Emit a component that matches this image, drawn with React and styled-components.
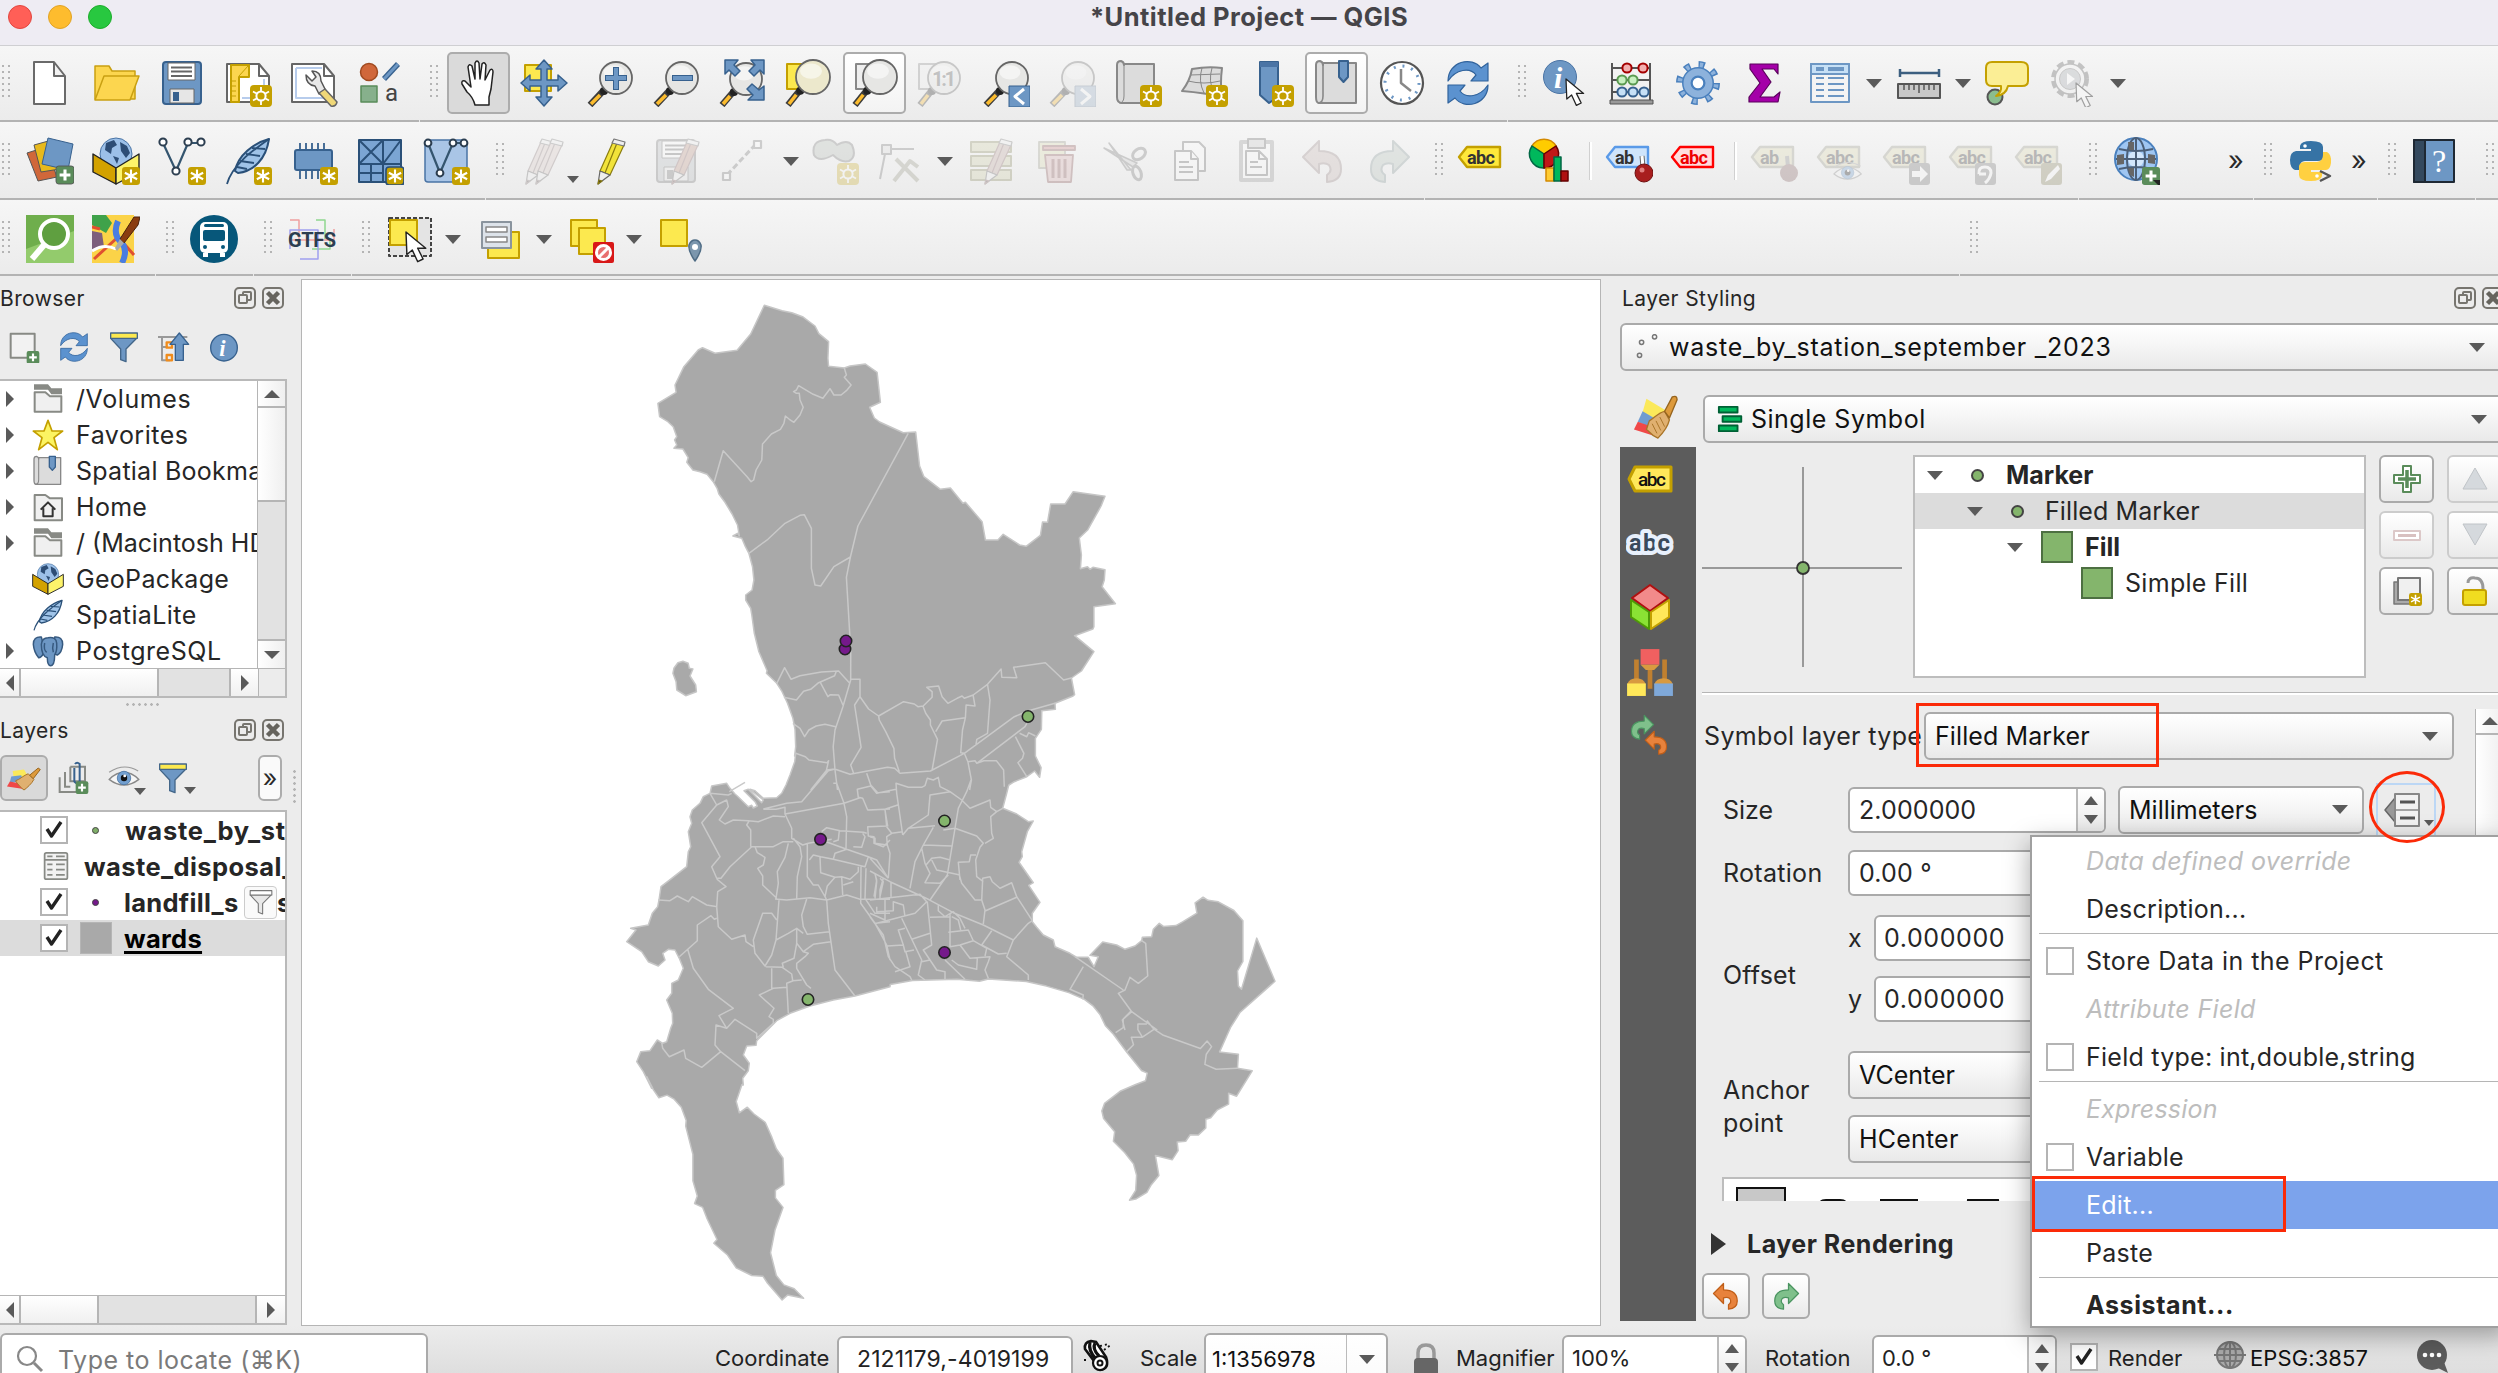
import React from 'react';
import styled, { createGlobalStyle, css } from 'styled-components';

const GlobalStyle = createGlobalStyle`
  * { box-sizing: border-box; }
  body { margin: 0; background: #ececec; }
  svg { display: block; flex: none; }
  svg text { font-family: Roboto, "Liberation Sans", sans-serif; }
  svg text.serif { font-family: "Liberation Serif", serif; }
`;

const font = 'Inter, "Liberation Sans", sans-serif';
const raised = 'linear-gradient(#ffffff, #f7f7f7 40%, #e9e9e9)';

const Window = styled.div`
  position: relative;
  width: 2498px;
  height: 1373px;
  overflow: hidden;
  display: flex;
  flex-direction: column;
  background: #ececec;
  color: #262626;
  font-family: ${font};
  font-size: 25px;
  white-space: nowrap;
`;

const TitleBar = styled.header`
  display: grid;
  grid-template-columns: 1fr auto 1fr;
  flex: none;
  height: 46px;
  padding: 0 0 0 8px;
  background: #eeecf3;
  border-bottom: 1px solid #cfcfd2;
`;
const Lights = styled.div`
  display: flex;
  gap: 16px;
  padding-top: 5px;
`;
const Light = styled.i`
  width: 24px;
  height: 24px;
  border-radius: 50%;
  background: ${p => p.$c};
  border: 1px solid ${p => p.$b};
`;
const WindowTitle = styled.h1`
  margin: 0 8px 0 0;
  font-size: 25.5px;
  line-height: 33px;
  font-weight: 700;
  color: #454448;
  letter-spacing: 0.45px;
`;

const Toolbar = styled.div`
  display: flex;
  flex: none;
  height: ${p => p.$h}px;
  background: linear-gradient(#f6f6f6, #ebebeb);
`;
const Group = styled.div`
  display: flex;
  align-items: center;
  flex: none;
  width: ${p => p.$w}px;
  margin-right: 1px;
  padding-top: ${p => p.$pt || 0}px;
  border-bottom: 2px solid #b3b3b3;
`;
const Grip = styled.i`
  flex: none;
  width: 8px;
  height: 36px;
  margin: 0 7px 0 ${p => p.$ml ?? 10}px;
  background: radial-gradient(circle at 1px 1px, #b4b4b4 1.1px, transparent 1.3px) 0 0 / 6px 6px;
`;
const Tool = styled.button`
  display: flex;
  align-items: center;
  justify-content: center;
  flex: none;
  width: ${p => p.$w || 66}px;
  height: 62px;
  margin: 0 0 0 ${p => p.$ml || 0}px;
  padding: 0;
  border: 0;
  background: none;
  opacity: ${p => (p.$off ? 0.3 : 1)};
  ${p => p.$state && css`
    width: 63px;
    margin: 0 1px 0 2px;
    border: 2px solid #acacac;
    border-radius: 5px;
    background: ${p.$state === 'down' ? '#dadada' : 'linear-gradient(#fff, #f3f3f3)'};
  `}
`;
const Divider = styled.i`
  flex: none;
  width: 3px;
  height: 38px;
  margin: 0 ${p => p.$mr}px 0 ${p => p.$ml}px;
  background: #fff;
  border-left: 1px solid #d0d0d0;
`;
const Caret = styled.i`
  flex: none;
  width: 0;
  height: 0;
  margin: ${p => p.$m || '0 4px'};
  border: ${p => p.$n || 8}px solid transparent;
  border-top: ${p => (p.$n || 8) + (p.$n ? 1 : 1)}px solid #5a5a5a;
  border-bottom: 0;
`;
const More = styled.span`
  font-size: ${p => p.$s || 27}px;
  line-height: 28px;
  font-weight: 400;
  color: #2a2a2a;
  margin-left: ${p => p.$ml || 0}px;
`;

/* ---------- icons ---------- */

const Ico = ({ s = 48, v = '0 0 48 48', children }) => (
  <svg width={s} height={s} viewBox={v} fill="none" strokeLinejoin="round">{children}</svg>
);
const Glyph = styled.svg`
  margin: ${p => p.$m || 0};
`;
const Badge = ({ x = 26, y = 26, s = 22 }) => (
  <g transform={`translate(${x} ${y}) scale(${s / 22})`}>
    <rect width="22" height="22" rx="4" fill="#c4a000" />
    <path d="M11 3v16M3.5 7l15 8M3.5 15l15-8" stroke="#fff" strokeWidth="2.6" />
  </g>
);
const GearBadge = () => (
  <g transform="translate(26 26)">
    <rect width="22" height="22" rx="4" fill="#c4a000" />
    <path d="M11 2v18M3 6.500l16 9M3 15.500l16-9" stroke="#fff" strokeWidth="1.800" />
    <circle cx="11" cy="11" r="4.600" fill="#c4a000" stroke="#fff" strokeWidth="2" />
  </g>
);
const PlusBadge = ({ x = 28, y = 28, s = 20 }) => (
  <g transform={`translate(${x} ${y}) scale(${s / 20})`}>
    <rect width="20" height="20" rx="3" fill="#5a8c5a" />
    <path d="M10 4v12M4 10h12" stroke="#fff" strokeWidth="3.4" />
  </g>
);
const Glass = ({ x = 30, y = 19, r = 16, fill = '#e6e6e4', children }) => (
  <g>
    <path d={`M${x - r * 0.75} ${y + r * 0.75}L4 46`} stroke="#3c3c3c" strokeWidth="6.5" />
    <path d={`M${x - r * 0.75 - 4} ${y + r * 0.75 + 5}L5 45`} stroke="#fcbc2e" strokeWidth="3.5" />
    <circle cx={x - r * 0.75} cy={y + r * 0.75 + 1} r="4" fill="#222" />
    <circle cx={x} cy={y} r={r} fill={fill} stroke="#666" strokeWidth="1.8" />
    <ellipse cx={x - 2} cy={y - r * 0.35} rx={r * 0.65} ry={r * 0.45} fill="#fff" opacity=".55" />
    {children}
  </g>
);
const Tag = ({ bg = '#ffe83b', edge = '#c4a000', text = 'abc', ink = '#333' }) => (
  <g>
    <path d="M2 20L10 10H43V30H10Z" fill={bg} stroke={edge} strokeWidth="2.4" />
    <text x="10" y="26.5" fontSize="18" fontWeight="700" fill={ink} textLength={text === 'abc' ? 28 : 19}>{text}</text>
  </g>
);
const Pencil = ({ x = 0, c = '#f2e33a', e = '#8a7c10' }) => (
  <g transform={`translate(${x} 0)`} stroke={e} strokeWidth="1.2">
    <path d="M27 5L38 8L24 38L14 34Z" fill={c} />
    <path d="M31 6L19 36" stroke={e} />
    <path d="M14 34L24 38L12 47Z" fill="#eee" stroke="#666" />
    <path d="M12 47l1-4 3 1z" fill="#333" />
    <path d="M28 2L39 5L38 9L26 6Z" fill="#eee" stroke="#777" />
  </g>
);
const Cursor = ({ x = 0, y = 0, s = 1 }) => (
  <path transform={`translate(${x} ${y}) scale(${s})`} d="M0 0L1 25L7 20L13 33L19 30L13 18L22 18Z" fill="#fff" stroke="#222" strokeWidth="1.6" />
);
const Funnel = ({ a = '#6d97c4', top = '#fce94f', e = '#436689' }) => (
  <g stroke={e} strokeWidth="2">
    <path d="M4 11L19 27V43L27 46V27L43 11Z" fill={a} />
    <rect x="4" y="3" width="40" height="8" fill={top} />
  </g>
);
const Feather = () => (
  <g>
    <path d="M45 2C30 6 14 18 11 34L14 36C30 34 42 22 45 2Z" fill="#9fc3e8" stroke="#2a5078" strokeWidth="2" />
    <path d="M45 2C28 14 8 28 3 47M16 24l14 2M22 17l14 2M28 11l13 1M13 30l10 2" stroke="#2a5078" strokeWidth="1.8" />
  </g>
);
const Refresh = () => (
  <g fill="#5b92cf" stroke="#31639c" strokeWidth="1.2">
    <path d="M4 22C4 2 28-3 37 9L44 4V22H27L32 16C26 8 12 10 4 22Z" />
    <path d="M44 26C44 46 20 51 11 39L4 44V26H21L16 32C22 40 36 38 44 26Z" />
  </g>
);
const BoxGlobe = () => (
  <g>
    <circle cx="24" cy="17" r="16" fill="#9cc0e8" stroke="#4a74a5" />
    <path d="M14 6l8-3 3 5-5 3-1 6-6-4zM28 5l7 4 3 7-4 5-5-7zM21 19l6 2-2 6z" fill="#2d4d75" />
    <path d="M1 17L24 31V47L1 35Z" fill="#d3a200" stroke="#222" strokeWidth="1.4" />
    <path d="M47 17L24 31V47L47 35Z" fill="#fdf36a" stroke="#222" strokeWidth="1.4" />
  </g>
);
const Brush = () => (
  <g>
    <path d="M14 4L34 16L26 26L10 18Z" fill="#fbe95a" />
    <path d="M10 17L22 24L18 34L5 28Z" fill="#6f9cd0" />
    <path d="M5 28L22 34L20 42L1 36Z" fill="#f04848" />
    <path d="M17 27C22 24 27 18 33 17L38 26C36 34 31 40 26 45C18 42 18 38 14 36Z" fill="#e0b070" stroke="#a87428" strokeWidth="1.4" />
    <path d="M33 17L41 2Q46 0 46 5L38 24Z" fill="#dd9a3c" stroke="#96641e" strokeWidth="1.4" />
    <path d="M20 30l5 10M24 27l5 10M28 23l5 10" stroke="#a87428" />
  </g>
);
const FlatBrush = () => (
  <g>
    <path d="M8 14L24 12L30 22L10 26Z" fill="#fbe95a" />
    <path d="M6 22L20 20L24 30L4 30Z" fill="#6f9cd0" />
    <path d="M4 29L20 32L26 40L0 36Z" fill="#f04848" />
    <path d="M12 28C18 26 24 20 30 18L38 26C35 32 28 38 24 41C20 38 16 34 12 28Z" fill="#e0b070" stroke="#a87428" strokeWidth="1.4" />
    <path d="M32 20L44 10L47 12L37 25Z" fill="#dd9a3c" stroke="#96641e" strokeWidth="1.4" />
  </g>
);
const Folder = ({ home }) => home ? (
  <g stroke="#888a85" strokeWidth="3">
    <path d="M4 6H20L27 11H45V44H4Z" fill="#f0f0f0" />
    <path d="M13 28L24 17L35 28M17 26V38H31V26" stroke="#333" />
  </g>
) : (
  <g>
    <path d="M3 2H24L29 8H45V17H29L24 10H3Z" fill="#888a85" />
    <path d="M4 14H20L27 20H44V43H4Z" fill="#f0f0f0" stroke="#888a85" strokeWidth="3" />
  </g>
);
const BookmarkMap = () => (
  <g>
    <path d="M10 4H43V44H6Q3 44 3 38V6Q3 2 7 2Q10 3 10 6Z" fill="#dcdcdc" stroke="#888" strokeWidth="2" />
    <path d="M10 5V37Q10 44 5 44" stroke="#888" strokeWidth="1.6" />
    <path d="M26 2H35V18L30.5 23L26 18Z" fill="#6d97c4" stroke="#37618e" strokeWidth="2" />
  </g>
);
const Eye = () => (
  <g>
    <path d="M3 26Q24 6 45 26Q24 42 3 26Z" fill="#f6f6f6" stroke="#888" strokeWidth="2" />
    <circle cx="24" cy="24" r="9.5" fill="#729fcf" stroke="#3d6a9c" />
    <circle cx="24" cy="24" r="4.5" fill="#111" />
    <circle cx="25" cy="21" r="2" fill="#fff" />
    <path d="M3 16Q24 2 44 14" stroke="#999" strokeWidth="1.6" />
  </g>
);
const UndoArrow = ({ c = '#e8823c', e = '#c05e18' }) => (
  <path d="M4 20L20 4V14Q42 14 42 32Q42 44 28 45V38Q34 34 30 28Q26 25 20 27V36Z" fill={c} stroke={e} strokeWidth="2" />
);
const RedoArrow = ({ c = '#7fc08b', e = '#4a9460' }) => (
  <g transform="translate(48 0) scale(-1 1)"><UndoArrow c={c} e={e} /></g>
);
const DiskShape = ({ c = '#6d97c4', e = '#37618e' }) => (
  <g>
    <rect x="5" y="3" width="38" height="42" rx="3" fill={c} stroke={e} strokeWidth="2" />
    <rect x="10" y="4" width="27" height="17" fill="#fff" stroke="#666" />
    <path d="M13 8.500H34M13 12.500H34M13 17H34" stroke="#666" strokeWidth="2" />
    <rect x="12" y="30" width="24" height="14" fill="#e6e6e6" stroke="#666" />
    <rect x="15" y="33" width="6" height="9" fill={e} />
  </g>
);

const beads = [
  [19, 9, '#f2b0b0', '#a40000'], [35, 9, '#f2b0b0', '#a40000'],
  [14, 21, '#c8f0c0', '#5a9a50'], [25, 21, '#c8f0c0', '#5a9a50'],
  [14, 33, '#c6e0f6', '#37618e'], [25, 33, '#c6e0f6', '#37618e'], [36, 33, '#c6e0f6', '#37618e'],
];

const icons = {
  page: <path d="M8 3H28L39 17V45H8ZM28 3V17H39" fill="#fff" stroke="#6a6a6a" strokeWidth="2" />,
  open: <g fill="#fcd64f" stroke="#c9a012" strokeWidth="1.5"><path d="M3 7H17L20 12H43V40H3Z" /><path d="M12 17H47L38 41H3Z" /></g>,
  save: <DiskShape />,
  layout: <g><path d="M3 5H35L45 17V43H3Z" fill="#fff" stroke="#666" strokeWidth="2" /><path d="M35 5V17H45" stroke="#666" strokeWidth="2" /><path d="M7 6H25V18H15V43H7Z" fill="#fcd64f" stroke="#c4a000" strokeWidth="2" /><path d="M8 22h4M8 27h4M8 32h4M8 37h4M24 7L15 17" stroke="#c4a000" /><path d="M18 39H28M40 20V28" stroke="#b7ccec" strokeWidth="2" /><GearBadge /></g>,
  wrench: <g><path d="M2 5H34L44 17V43H2Z" fill="#fff" stroke="#666" strokeWidth="2" /><path d="M34 5V17H44" stroke="#666" strokeWidth="2" /><path d="M6 9H32M6 9V39H36" stroke="#b7ccec" strokeWidth="2" /><path d="M16 16L22 22L26 18L22 12Q31 12 31 22L36 32L29 35L25 27Q16 26 16 16Z" fill="#e8e8e8" stroke="#555" strokeWidth="1.5" /><path d="M29 34L35 30L47 43Q46 48 41 47Z" fill="#f0d878" stroke="#666" strokeWidth="1.5" /></g>,
  style: <g><circle cx="13" cy="13" r="8.500" fill="#d0673a" stroke="#a04a20" strokeWidth="1.500" /><path d="M28 20L42 5" stroke="#37618e" strokeWidth="5.500" /><path d="M28 20L42 5" stroke="#6d97c4" strokeWidth="3" /><rect x="5" y="27" width="16" height="16" fill="#87b08c" stroke="#5a8c5a" strokeWidth="1.500" /><text x="29" y="42" fontSize="24" fill="#444">a</text></g>,
  hand: <path d="M20 46Q18 38 12 33L7 25Q6 21 10 22L16 28L13 8Q14 4 17 7L20 20V4Q22 0 24 4L25 20L27 5Q29 2 31 6L30 21L35 11Q38 9 38 13L36 30L34 38V46Z" fill="#fff" stroke="#222" strokeWidth="1.500" />,
  pan: <g><rect x="5" y="6" width="26" height="26" fill="#fce94f" stroke="#c4a000" strokeWidth="2" /><path d="M24 1L32 10H27V21H38V16L47 24L38 32V27H27V38H32L24 47L16 38H21V27H10V32L1 24L10 16V21H21V10H16Z" fill="#6d97c4" stroke="#37618e" strokeWidth="1.500" /></g>,
  zin: <Glass><path d="M30 8V31M19 19H41" stroke="#37618e" strokeWidth="6" /><path d="M30 9V30M20 19H40" stroke="#6d97c4" strokeWidth="4" /></Glass>,
  zout: <Glass><path d="M20 19H41" stroke="#37618e" strokeWidth="6" /><path d="M21 19H40" stroke="#6d97c4" strokeWidth="4" /></Glass>,
  zfull: <g><Glass x={28} y={20} /><g fill="#6d97c4" stroke="#37618e" strokeWidth="1.500"><path d="M7 1H20L16 6L22 12L17 17L11 11L7 15Z" /><path d="M46 1H33L37 6L31 12L36 17L42 11L46 15Z" /><path d="M46 41H30L35 36L29 30L34 25L41 31L46 27Z" /></g></g>,
  zsel: <g><rect x="3" y="5" width="25" height="25" fill="#fce94f" stroke="#c4a000" strokeWidth="2" /><Glass x={29} y={18} r={17} fill="#ece8cc" /></g>,
  zlayer: <g><rect x="5" y="5" width="25" height="25" fill="#eee" stroke="#888" strokeWidth="2" /><Glass x={29} y={18} r={17} /></g>,
  znative: <g><rect x="3" y="5" width="25" height="25" fill="#eee" stroke="#888" strokeWidth="2" /><Glass x={28} y={19} r={16}><text x="16" y="27" fontSize="20" fontWeight="700" fill="#555" textLength="24">1:1</text></Glass></g>,
  zlast: <g><Glass /><rect x="27" y="27" width="21" height="21" fill="#6d97c4" stroke="#37618e" /><path d="M42 30L33 37.500L42 45" stroke="#fff" strokeWidth="3" /></g>,
  znext: <g><Glass /><rect x="27" y="27" width="21" height="21" fill="#9ab0c8" stroke="#6a7f95" /><path d="M33 30L42 37.500L33 45" stroke="#fff" strokeWidth="3" /></g>,
  newmap: <g><path d="M10 5H40V44H7Q3 43 3 38V6Q3 2 7 2Q10 3 10 6Z" fill="#dcdcdc" stroke="#888" strokeWidth="2" /><path d="M10 5V37Q10 44 5 44" stroke="#888" /><GearBadge /></g>,
  map3d: <g><path d="M12 10Q28 7 42 9Q40 24 42 38Q26 34 2 32Q10 22 12 10Z" fill="#dcdcdc" stroke="#888" strokeWidth="2" /><path d="M8 22Q24 26 40 22M22 9Q18 22 24 34M32 9Q28 22 34 34M10 16L40 15" stroke="#888" /><GearBadge /></g>,
  bookmark: <g><path d="M14 3H32V38L23 44L14 36Z" fill="#6d97c4" stroke="#37618e" strokeWidth="2" /><path d="M14 3H32V8H14Z" fill="#4a74a5" /><GearBadge /></g>,
  showbm: <BookmarkMap />,
  clock: <g><circle cx="24" cy="24" r="21" fill="#fff" stroke="#555" strokeWidth="2.200" /><circle cx="24" cy="24" r="17" stroke="#6d97c4" strokeWidth="3" strokeDasharray="2 6.900" /><path d="M23 10V24L33 32" stroke="#888" strokeWidth="2.500" /></g>,
  refresh: <Refresh />,
  identify: <g><circle cx="18" cy="18" r="16.500" fill="#6d97c4" stroke="#4a74a5" /><text className="serif" x="12" y="29" fontSize="30" fontStyle="italic" fontWeight="700" fill="#fff">i</text><Cursor x={24} y={20} s={0.8} /></g>,
  abacus: <g><path d="M4 4V42M42 4V42M4 9H42M4 21H42M4 33H42" stroke="#555" strokeWidth="2" /><rect x="2" y="41" width="43" height="4" fill="#999" stroke="#555" />{beads.map((b, i) => <circle key={i} cx={b[0]} cy={b[1]} r="4.600" fill={b[2]} stroke={b[3]} strokeWidth="2" />)}</g>,
  gear: <g><circle cx="24" cy="24" r="18" stroke="#4a80bd" strokeWidth="8" strokeDasharray="6 8.137" /><circle cx="24" cy="24" r="17" stroke="#8db2dc" strokeWidth="7" strokeDasharray="3 10.350" strokeDashoffset="-1.300" /><circle cx="24" cy="24" r="11" stroke="#4a80bd" strokeWidth="10" /><circle cx="24" cy="24" r="11" stroke="#8db2dc" strokeWidth="7" /><circle cx="24" cy="24" r="6" fill="#fff" stroke="#4a80bd" strokeWidth="1.500" /></g>,
  sigma: <path d="M10 5H38V15L34 10H22L31 23L20 38H34L40 33L38 43H9V38L20 24L10 10Z" fill="#a400a8" stroke="#5a005c" strokeWidth="1.200" />,
  table: <g><rect x="5" y="5" width="38" height="38" fill="#f4f4f4" stroke="#6d97c4" strokeWidth="2" /><rect x="5" y="5" width="38" height="10" fill="#c6e0f6" stroke="#6d97c4" strokeWidth="2" /><path d="M10 10H18M22 10H38" stroke="#6d97c4" strokeWidth="4" /><path d="M10 19H18M22 19H38M10 25H18M22 25H38M10 31H18M22 31H38M10 37H18M22 37H38" stroke="#6d97c4" strokeWidth="2" /></g>,
  ruler: <g><path d="M5 14H44M5 10V18M44 10V18" stroke="#3c5f80" strokeWidth="2.500" /><rect x="3" y="25" width="42" height="14" fill="#c8c8c8" stroke="#555" strokeWidth="2" /><path d="M9 25v6M14 25v6M19 25v6M24 25v9M29 25v6M34 25v6M39 25v6" stroke="#555" strokeWidth="1.500" /></g>,
  tip: <g><circle cx="11" cy="38" r="7.500" fill="#8bbd8f" stroke="#555" strokeWidth="2" /><path d="M8 3H37Q44 3 44 9V22Q44 27 38 27H24Q22 36 12 37Q18 33 17 27H8Q2 27 2 21V9Q2 3 8 3Z" fill="#fbee95" stroke="#c4a000" strokeWidth="2" /></g>,
  action: <g opacity=".38"><circle cx="20" cy="20" r="17" stroke="#777" strokeWidth="4" strokeDasharray="7 4" /><circle cx="20" cy="20" r="15" fill="#f4f4f4" stroke="#777" strokeWidth="1.500" /><circle cx="20" cy="20" r="10.500" fill="#b5b9bd" stroke="#888" /><path d="M17 14L25 20L17 26Z" fill="#fff" /><Cursor x={26} y={24} s={0.75} /></g>,
  source: <g stroke="#555" strokeWidth="1"><path d="M1 16L20 10L31 40L12 44Z" fill="#d0673a" /><path d="M8 8L26 3L34 32L15 35Z" fill="#e8b91c" /><path d="M22 1L47 7L42 33L16 27Z" fill="#6d97c4" stroke="#37618e" /><PlusBadge x={30} y={29} s={18} /></g>,
  gpkg: <g><BoxGlobe /><Badge x={30} y={30} s={18} /></g>,
  shp: <g><path d="M5 6L18 34L30 6H42" stroke="#34556f" strokeWidth="2.200" />{[[5, 5], [18, 34], [30, 5], [43, 5]].map((p, i) => <circle key={i} cx={p[0]} cy={p[1]} r="3.600" fill="#fff" stroke="#2c3e50" strokeWidth="2" />)}<Badge x={30} y={30} s={18} /></g>,
  spatialite: <g><Feather /><Badge x={30} y={30} s={18} /></g>,
  chip: <g><path d="M10 6V42M16 6V42M22 6V42M28 6V42M34 6V42" stroke="#37618e" strokeWidth="1.800" /><rect x="5" y="13" width="37" height="20" rx="2" fill="#6d97c4" stroke="#37618e" strokeWidth="2" /><Badge x={30} y={30} s={18} /></g>,
  mesh: <g stroke="#2a5078" strokeWidth="2"><rect x="3" y="3" width="42" height="42" fill="#7ba5d3" /><path d="M3 27H45M27 3V45M3 3L27 27L45 3M3 27L27 3M15 27V45M3 36H27" /><Badge x={30} y={30} s={18} /></g>,
  virtual: <g><rect x="3" y="3" width="42" height="42" rx="3" fill="#a9c5e6" stroke="#4a74a5" strokeWidth="1.500" /><path d="M6 6L18 36L31 6H42" stroke="#34556f" strokeWidth="2.200" />{[[6, 6], [18, 36], [31, 6], [42, 6]].map((p, i) => <circle key={i} cx={p[0]} cy={p[1]} r="3.400" fill="#fff" stroke="#2c3e50" strokeWidth="2" />)}<Badge x={30} y={30} s={18} /></g>,
  pencils: <g><Pencil x={-6} c="#d8c8c4" e="#877" /><Pencil x={4} c="#d8c8c4" e="#877" /></g>,
  pencil: <Pencil />,
  saveedit: <g><DiskShape c="#b8bcc0" e="#777" /><Pencil x={8} c="#c09888" e="#866" /></g>,
  line: <g stroke="#777" strokeWidth="2.200"><path d="M9 38L37 8" strokeDasharray="6 3" strokeWidth="3" /><rect x="5" y="36" width="7" height="7" fill="#fff" /><rect x="36" y="4" width="7" height="7" fill="#fff" /></g>,
  poly: <g><path d="M3 18Q0 4 14 3Q22 2 26 8Q36 2 41 8Q46 20 38 24Q30 26 22 18Q8 26 3 18Z" fill="#b4bcb4" stroke="#777" strokeWidth="2" /><g opacity=".8"><GearBadge /></g></g>,
  vertex: <g stroke="#777" strokeWidth="2"><path d="M6 42L12 12L40 12" /><rect x="8" y="8" width="9" height="9" fill="#ddd" /><path d="M20 44L36 24L44 30M22 22L44 44" strokeWidth="4" stroke="#998" /></g>,
  form: <g stroke="#8a8a60" strokeWidth="2"><rect x="4" y="5" width="40" height="10" fill="#cfcfa8" /><rect x="4" y="19" width="40" height="10" fill="#cfcfa8" /><rect x="4" y="33" width="40" height="10" fill="#cfcfa8" /><Pencil x={6} c="#c0a8a0" e="#866" /></g>,
  trash: <g stroke="#855" strokeWidth="1.800"><rect x="4" y="5" width="26" height="26" fill="#dcdcb0" stroke="#998" /><rect x="8" y="9" width="32" height="4" fill="#c88" /><path d="M10 18H38L36 45H13Z" fill="#d8b0b0" /><path d="M18 22V41M24 22V41M30 22V41" strokeWidth="3" /></g>,
  cut: <g stroke="#777" strokeWidth="1.500"><path d="M3 11L32 30L36 26ZM8 6L30 33L26 33Z" fill="#ccc" /><ellipse cx="38" cy="17" rx="7" ry="5" transform="rotate(-35 38 17)" strokeWidth="3" /><ellipse cx="36" cy="36" rx="4" ry="7" transform="rotate(-20 36 36)" strokeWidth="3" /></g>,
  copy: <g fill="#fff" stroke="#666" strokeWidth="2"><path d="M16 5H32L38 11V34H16Z" /><path d="M8 14H24L31 22V43H8Z" /><path d="M24 14V22H31M12 25h10M12 30h14M12 35h14" /></g>,
  paste: <g fill="#fff" stroke="#666" strokeWidth="2"><rect x="8" y="5" width="31" height="38" strokeWidth="4" stroke="#999" /><rect x="15" y="2" width="17" height="9" fill="#ccc" /><path d="M13 14H26L34 22V38H13ZM26 14V22H34M17 25h8M17 30h12" /></g>,
  undo: <UndoArrow c="#c8b8b4" e="#988" />,
  redo: <RedoArrow c="#b8c4bc" e="#899" />,
  label: <Tag />,
  diagram: <g stroke="#3a2a1a" strokeWidth="1.500"><path d="M18 17L6 9A14 14 0 0 1 30 9Z" fill="#ffcc00" stroke="#d48a00" /><path d="M18 17L6 9A14 14 0 0 0 18 31Z" fill="#00b85c" stroke="#064" /><path d="M18 17L30 9A14 14 0 0 1 18 31Z" fill="#c01818" stroke="#600" /><rect x="20" y="31" width="8" height="13" fill="#ffcc33" stroke="#d48a00" /><rect x="28" y="20" width="7" height="24" fill="#00b85c" stroke="#064" /><rect x="35" y="34" width="7" height="10" fill="#b01010" stroke="#600" /></g>,
  pin: <g><Tag bg="#cfe4fb" edge="#5a9ae8" text="ab" /><path d="M37 19L38 30" stroke="#666" strokeWidth="5" /><path d="M37 19L38 30" stroke="#fff" strokeWidth="3" /><circle cx="39" cy="36" r="9" fill="#a81e1e" stroke="#701010" /><circle cx="37" cy="33" r="2.500" fill="#e08080" /></g>,
  labelred: <Tag bg="#fdd" edge="#f00" ink="#e00" />,
  pinoff: <g><Tag bg="#ddd8b0" edge="#998" text="ab" /><path d="M37 19L38 30" stroke="#888" strokeWidth="4" /><circle cx="39" cy="36" r="9" fill="#866" /></g>,
  labeleye: <g><Tag bg="#ddd8b0" edge="#998" /><g transform="translate(16 20) scale(.65)"><Eye /></g></g>,
  labelmove: <g><Tag bg="#ddd8b0" edge="#998" /><rect x="27" y="26" width="21" height="22" rx="3" fill="#777" /><path d="M30 34h8v-5l8 8-8 8v-5h-8z" fill="#fff" /></g>,
  labelrot: <g><Tag bg="#ddd8b0" edge="#998" /><rect x="27" y="26" width="21" height="22" rx="3" fill="#777" /><path d="M31 37Q30 30 37 30Q43 30 43 36Q42 42 37 46M31 37L38 37" stroke="#fff" strokeWidth="3" /></g>,
  labeledit: <g><Tag bg="#ddd8b0" edge="#998" /><rect x="27" y="26" width="21" height="22" rx="3" fill="#8a8560" /><path d="M31 45L34 38L44 28L46 32L37 42Z" fill="#fff" /></g>,
  globe: <g><circle cx="24" cy="22" r="21" fill="#9fc6f2" stroke="#4a80bd" strokeWidth="2" /><circle cx="24" cy="22" r="8" fill="#e8f4ff" opacity=".7" /><ellipse cx="24" cy="22" rx="9" ry="21" stroke="#4b5f78" strokeWidth="2" /><path d="M4 22H44M7 12Q24 16 41 12M7 32Q24 28 41 32M24 1V43" stroke="#4b5f78" strokeWidth="2" /><path d="M5 18l7-1v10l-7 1zM36 17l7 1v9l-7-1zM16 5l6 0v8h-5zM16 31h6v9l-4-2z" fill="#666" /><PlusBadge x={30} y={30} s={18} /><path d="M41 43h12l-6 6z" fill="#222" /></g>,
  python: <g><path d="M25 4Q37 4 37 10V20Q37 24 32 24H19Q14 24 14 30V33H9Q4 31 4 23Q4 15 10 14H25V12H14V9Q15 4 25 4Z" fill="#3673a5" /><circle cx="19" cy="9" r="1.800" fill="#fff" /><path d="M25 44Q13 44 13 38V29Q14 25 19 25H31Q37 24 37 18V15H41Q46 18 45 26Q44 33 40 33H25V35H36V39Q35 44 25 44Z" fill="#ffd040" /><circle cx="31" cy="39" r="1.800" fill="#fff" /><path d="M34 34L44 39L34 44" stroke="#555" strokeWidth="2.500" /></g>,
  book: <g><rect x="4" y="3" width="40" height="42" fill="#6d97c4" stroke="#1e2833" strokeWidth="2" /><rect x="4" y="3" width="11" height="42" fill="#34495e" stroke="#1e2833" strokeWidth="2" /><text className="serif" x="22" y="35" fontSize="32" fill="#fff">?</text></g>,
  osmsearch: <g><rect width="48" height="48" fill="#6fae4c" /><path d="M0 34L48 16V48H0Z" fill="#93cb6c" /><circle cx="28" cy="19" r="14" fill="#5f9f40" stroke="#fff" strokeWidth="4" /><path d="M18 30L6 44" stroke="#fff" strokeWidth="6" /></g>,
  qms: <g><rect width="42" height="48" fill="#fbd348" /><path d="M0 0h14l6 8-6 10L0 10z" fill="#3fa24a" /><path d="M0 16l10 2 2 14-12 4z" fill="#7d5f7c" /><path d="M0 12l8 2M2 44L26 22L42 40" stroke="#e05030" strokeWidth="3" /><path d="M26 6Q20 20 30 28Q36 36 30 48" stroke="#4a7de0" strokeWidth="6" /><path d="M0 36Q12 28 24 34" stroke="#fff" strokeWidth="3" /><path d="M28 24L42 2L48 2L46 10L32 28Z" fill="#8a3c10" stroke="#4a2008" /><path d="M28 24L32 28L25 36L23 33Z" fill="#aaa" /></g>,
  bus: <g><circle cx="24" cy="24" r="24" fill="#07577a" /><rect x="10" y="7" width="28" height="31" rx="5" fill="#fff" /><rect x="14" y="9" width="20" height="3" rx="1.500" fill="#07577a" /><rect x="13" y="15" width="22" height="11" rx="2" fill="#07577a" /><circle cx="15" cy="32" r="2" fill="#07577a" /><circle cx="33" cy="32" r="2" fill="#07577a" /><path d="M13 38v4h5v-4M30 38v4h5v-4" fill="#fff" /></g>,
  gtfs: <g><path d="M2 5H11V26" stroke="#f0a0a0" strokeWidth="1.500" /><path d="M28 5H37V24M24 34H42V24" stroke="#90d890" strokeWidth="1.500" /><path d="M2 34V15H30V44H12" stroke="#a0a0f0" strokeWidth="1.500" /><path d="M4 25H46V14" stroke="#f0a0a0" strokeWidth="1.500" /><text x="0" y="32" fontSize="20" fontWeight="700" fill="#2c3e50" textLength="48">GTFS</text></g>,
  select: <g><rect x="3" y="3" width="42" height="38" fill="#e4e4e4" stroke="#444" strokeWidth="2" strokeDasharray="4 2" /><rect x="4" y="5" width="27" height="25" fill="#fce94f" stroke="#c4a000" strokeWidth="2" /><Cursor x={20} y={17} s={0.9} /></g>,
  selform: <g><rect x="11" y="17" width="31" height="26" fill="#fce94f" stroke="#c4a000" strokeWidth="2" /><rect x="5" y="7" width="29" height="26" fill="#dde3ea" stroke="#8a949e" strokeWidth="2" /><rect x="9" y="12" width="21" height="5" fill="#fff" stroke="#888" strokeWidth="1.500" /><rect x="9" y="22" width="21" height="5" fill="#fff" stroke="#888" strokeWidth="1.500" /></g>,
  deselect: <g><rect x="3" y="5" width="26" height="26" fill="#fce94f" stroke="#c4a000" strokeWidth="2" /><rect x="11" y="13" width="26" height="26" fill="#fce94f" stroke="#c4a000" strokeWidth="2" /><rect x="25" y="27" width="21" height="21" rx="2" fill="#d81818" /><circle cx="35.500" cy="37.500" r="7" fill="#e87070" stroke="#fff" strokeWidth="3" /><path d="M31 42L40 33" stroke="#fff" strokeWidth="3" /></g>,
  selloc: <g><rect x="5" y="5" width="26" height="26" fill="#fce94f" stroke="#c4a000" strokeWidth="2" /><path d="M39 46Q32 36 33 30Q35 25 39 25Q43 25 45 30Q46 36 39 46Z" fill="#7b96ad" stroke="#4f6c85" strokeWidth="1.500" /><circle cx="39" cy="32" r="3" fill="#fff" /></g>,
};

const T = ({ i, ...p }) => <Tool {...p}><Ico>{icons[i]}</Ico></Tool>;

/* ---------- generic controls ---------- */

const Text = styled.span`
  font-size: ${p => p.$s || 25}px;
  letter-spacing: ${p => p.$ls || 0}px;
  margin-left: ${p => p.$ml || 0}px;
  font-weight: ${p => (p.$b ? 700 : 400)};
  width: ${p => (p.$w ? p.$w + 'px' : 'auto')};
  color: ${p => p.$c || 'inherit'};
  ${p => p.$lh && `line-height: ${p.$lh}px;`}
  flex: none;
`;
const Spacer = styled.div`
  flex: none;
  height: ${p => p.$h}px;
`;
const DockTitle = styled.div`
  display: flex;
  align-items: center;
  flex: none;
  height: ${p => p.$h || 44}px;
  padding-left: ${p => p.$pl || 0}px;
`;
const DockButton = styled.i`
  display: grid;
  place-items: center;
  flex: none;
  width: 22px;
  height: 22px;
  margin-left: ${p => p.$ml ?? 6}px;
  border: 2px solid #77756f;
  border-radius: 5px;
`;
const DockButtons = ({ ml }) => (
  <>
    <DockButton $ml={ml}><Ico s={16} v="0 0 16 16"><rect x="6" y="2" width="8" height="8" rx="1" stroke="#77756f" strokeWidth="2" /><rect x="2" y="5" width="8" height="8" rx="1" fill="#ececec" stroke="#77756f" strokeWidth="2" /></Ico></DockButton>
    <DockButton><Ico s={16} v="0 0 16 16"><path d="M2.500 2.500L13.500 13.500M13.500 2.500L2.500 13.500" stroke="#66645e" strokeWidth="4.500" /></Ico></DockButton>
  </>
);

const Combo = styled.div`
  display: flex;
  align-items: ${p => (p.$top ? 'flex-start' : 'center')};
  flex: none;
  width: ${p => p.$w}px;
  height: ${p => p.$h || 48}px;
  margin: ${p => p.$mt || 0}px 0 0 ${p => p.$ml || 0}px;
  padding: 0 ${p => p.$pr ?? 14}px 0 ${p => p.$pl || 9}px;
  background: ${p => (p.$top ? 'linear-gradient(#fff, #fafafa)' : raised)};
  border: 2px solid #aaa;
  border-radius: 6px;
  color: #111;
`;
const Fill = styled.i`
  flex: 1;
`;
const Field = styled.div`
  display: flex;
  align-items: ${p => (p.$top ? 'flex-start' : 'center')};
  flex: none;
  width: ${p => p.$w}px;
  height: ${p => p.$h || 46}px;
  margin: ${p => p.$mt || 0}px 0 0 ${p => p.$ml || 0}px;
  padding-left: ${p => p.$pl ?? 9}px;
  background: #fff;
  border: 2px solid #aaa;
  border-radius: 6px;
  overflow: hidden;
`;
const Steps = styled.i`
  display: flex;
  flex-direction: column;
  align-items: center;
  justify-content: center;
  gap: 10px;
  width: 28px;
  align-self: stretch;
  border-left: 2px solid #bbb;
  background: ${raised};
  &::before, &::after {
    content: '';
    border: 7.5px solid transparent;
  }
  &::before { border-bottom: 9px solid #5a5a5a; border-top: 0; }
  &::after { border-top: 9px solid #5a5a5a; border-bottom: 0; }
`;
const DropZone = styled.i`
  display: flex;
  justify-content: center;
  width: 40px;
  align-self: stretch;
  padding-top: 20px;
  border-left: 1px solid #bbb;
`;
const Spin = ({ value, ls, ts, ...p }) => <Field {...p}><Text $ls={ls} $s={ts}>{value}</Text><Fill /><Steps /></Field>;

const Check = styled.i`
  display: grid;
  place-items: center;
  flex: none;
  width: 28px;
  height: 28px;
  margin: ${p => p.$mt || 0}px 0 0 ${p => p.$ml || 0}px;
  background: #fff;
  border: 2px solid #b4b4b4;
`;
const Tick = () => <Ico s={24} v="0 0 24 24"><path d="M5 11L9.500 18L19 4" stroke="#222" strokeWidth="3.400" /></Ico>;

/* ---------- scroll bars ---------- */

const Bar = styled.div`
  display: flex;
  flex: none;
  flex-direction: ${p => (p.$v ? 'column' : 'row')};
  ${p => (p.$v ? 'width: 28px;' : 'height: 28px;')}
  ${p => p.$w && `width: ${p.$w}px;`}
  margin-top: ${p => p.$mt || 0}px;
  background: #e2e2e2;
  border: 0 solid #b5b5b5;
  ${p => (p.$v ? 'border-left-width: 1px;' : 'border-top-width: 1px;')}
`;
const BarCorner = styled.i`
  width: 27px;
  height: 28px;
  background: #ececec;
  border: solid #b5b5b5;
  border-width: 1px 0 0 1px;
`;
const Part = styled.i`
  display: grid;
  place-items: center;
  flex: ${p => (p.$grow ? 1 : 'none')};
  ${p => (p.$v ? `height: ${p.$n}px;` : `width: ${p.$n}px;`)}
  background: ${p => (p.$groove ? '#e2e2e2' : p.$v ? 'linear-gradient(90deg,#fff,#efefef)' : 'linear-gradient(#fff,#f0f0f0)')};
  border: 0 solid #b5b5b5;
  ${p => (p.$v ? 'border-bottom-width: 2px;' : 'border-right-width: 2px;')}
  &:last-child { border-width: 0; }
`;
const Arrow = styled.i`
  width: 0;
  height: 0;
  border: 8px solid transparent;
  ${p => p.$d === 'up' && 'border-bottom-color:#5a5a5a; border-top-width:0;'}
  ${p => p.$d === 'down' && 'border-top-color:#5a5a5a; border-bottom-width:0;'}
  ${p => p.$d === 'left' && 'border-right-color:#5a5a5a; border-left-width:0;'}
  ${p => p.$d === 'right' && 'border-left-color:#5a5a5a; border-right-width:0;'}
`;

/* ---------- left docks ---------- */

const Main = styled.div`
  display: flex;
  flex: none;
  height: 1050px;
`;
const Left = styled.aside`
  display: flex;
  flex-direction: column;
  width: 287px;
  flex: none;
`;
const SplitDots = styled.i`
  width: 34px;
  height: 4px;
  margin: 5px 0 5px 126px;
  flex: none;
  background: radial-gradient(circle at 1.5px 1.5px, #b4b4b4 1.2px, transparent 1.5px) 0 0 / 6px 6px;
`;
const EdgeDots = styled.i`
  flex: none;
  width: 4px;
  height: 34px;
  margin: ${p => p.$m};
  background: radial-gradient(circle at 1.5px 1.5px, #b4b4b4 1.2px, transparent 1.5px) 0 0 / 6px 6px;
`;
const MiniBar = styled.div`
  display: flex;
  align-items: center;
  flex: none;
  gap: 18px;
  height: 54px;
  margin-bottom: 5px;
  padding: 0 0 0 8px;
`;
const Frame = styled.div`
  display: flex;
  flex-direction: column;
  flex: none;
  height: ${p => p.$h}px;
  border: 2px solid #b9b9b9;
  border-left: 0;
  background: #fff;
`;
const TreeArea = styled.div`
  display: flex;
  flex: 1;
  min-height: 0;
`;
const Rows = styled.div`
  flex: 1;
  min-width: 0;
  overflow: hidden;
`;
const Row = styled.div`
  display: flex;
  align-items: center;
  height: 36px;
  padding-left: ${p => p.$pl ?? 6}px;
  background: ${p => (p.$sel ? '#dcdcdc' : 'none')};
`;
const Twisty = styled.i`
  flex: none;
  width: 8px;
  height: 16px;
  margin-right: 18px;
  border: 8px solid transparent;
  border-right-width: 0;
  border-left-color: ${p => (p.$none ? 'transparent' : '#5a5a5a')};
`;
const BigTwisty = styled.i`
  flex: none;
  width: 15px;
  height: 22px;
  margin-right: 21px;
  border: solid transparent;
  border-width: 11px 0 11px 15px;
  border-left-color: #333;
`;
const BarRow = styled.div`
  display: flex;
`;

const browserRows = [
  ['/Volumes', <Folder />, 1, 0.6],
  ['Favorites', <path d="M24 2L30 18H46L33 28L38 46L24 35L10 46L15 28L2 18H18Z" fill="#fcf462" stroke="#c4a000" strokeWidth="2.500" />, 1, 0.5],
  ['Spatial Bookmarks', <BookmarkMap />, 1, 0.25],
  ['Home', <Folder home />, 1, 0.3],
  ['/ (Macintosh HD)', <Folder />, 1, 0],
  ['GeoPackage', <BoxGlobe />, 0, 0.3],
  ['SpatiaLite', <Feather />, 0, 0.4],
  ['PostgreSQL', <g fill="#6d97c4" stroke="#36597f" strokeWidth="2.200"><path d="M14 3Q2 2 2 14Q3 26 10 34Q14 34 17 28V14Z" /><path d="M34 3Q46 2 46 14Q45 26 38 30L32 28Z" /><path d="M24 4Q36 2 37 12Q38 24 34 30Q34 46 28 46Q23 46 23 34Q14 32 14 14Q15 4 24 4Z" /><path d="M19 12Q17 22 22 26M32 12Q30 20 32 26" /></g>, 1, 0.55],
];

const Browser = () => (
  <>
    <DockTitle><Text $s={21} $ls={0.4} $w={229}>Browser</Text><DockButtons ml={5} /></DockTitle>
    <MiniBar>
      <Ico s={32}><rect x="4" y="4" width="36" height="36" fill="#f2f2f2" stroke="#888a85" strokeWidth="3" /><PlusBadge x={28} y={30} s={19} /></Ico>
      <Ico s={32}><Refresh /></Ico>
      <Ico s={32}><Funnel /></Ico>
      <Ico s={32}><path d="M0 9H44M6 9V44H18M6 24H14" stroke="#999" strokeWidth="3" /><rect x="13" y="17" width="8" height="8" stroke="#f08c1c" strokeWidth="3.500" /><rect x="13" y="36" width="8" height="8" stroke="#f08c1c" strokeWidth="3.500" /><path d="M32 3L46 20H38V44H26V20H18Z" fill="#6d97c4" stroke="#37618e" strokeWidth="2" /></Ico>
      <Ico s={32}><circle cx="24" cy="25" r="20" fill="#6d97c4" stroke="#37618e" strokeWidth="2" /><text className="serif" x="17" y="37" fontSize="34" fontStyle="italic" fontWeight="700" fill="#fff">i</text></Ico>
    </MiniBar>
    <Frame $h={319}>
      <TreeArea>
        <Rows>
          {browserRows.map(([name, icon, kids, ls]) => (
            <Row key={name}><Twisty $none={!kids} /><Ico s={32}>{icon}</Ico><Text $ml={12} $ls={ls}>{name}</Text></Row>
          ))}
        </Rows>
        <Bar $v>
          <Part $v $n={27}><Arrow $d="up" /></Part>
          <Part $v $n={94} />
          <Part $v $n={139} $groove />
          <Part $v $grow><Arrow $d="down" /></Part>
        </Bar>
      </TreeArea>
      <BarRow>
        <Bar $w={258}>
          <Part $n={21}><Arrow $d="left" /></Part>
          <Part $n={138} />
          <Part $n={72} $groove />
          <Part $grow><Arrow $d="right" /></Part>
        </Bar>
        <BarCorner />
      </BarRow>
    </Frame>
  </>
);

const ToolToggle = styled.i`
  display: grid;
  place-items: center;
  flex: none;
  width: ${p => p.$w}px;
  height: 46px;
  margin-left: ${p => p.$ml || 0}px;
  border: 2px solid #acacac;
  border-radius: 6px;
  font-style: normal;
  background: ${p => (p.$down ? '#d9d9d9' : '#fafafa')};
`;
const LayersBar = styled.div`
  display: flex;
  align-items: center;
  height: 50px;
  margin: 5px 0 7px;
  flex: none;
`;
const LayerText = styled(Text)`
  font-weight: 700;
  ${p => p.$u && 'text-decoration: underline; text-decoration-thickness: 3px; text-underline-offset: 3px; text-decoration-skip-ink: none; color: #000;'}
`;
const Swatch = styled.i`
  display: block;
  flex: none;
  width: 32px;
  height: 32px;
  margin-left: ${p => p.$ml || 0}px;
  background: ${p => p.$c};
  border: ${p => p.$e ? `2px solid ${p.$e}` : '1px solid #b5b5b5'};
`;
const Dot = styled.i`
  flex: none;
  width: ${p => p.$d}px;
  height: ${p => p.$d}px;
  margin: 0 ${p => p.$mr || 0}px 0 ${p => p.$ml || 0}px;
  border-radius: 50%;
  background: ${p => p.$c};
  border: ${p => p.$bw || 1}px solid #444;
`;
const FilterChip = styled.i`
  display: grid;
  place-items: center;
  flex: none;
  width: 33px;
  height: 33px;
  border: 1px solid #ccc;
  border-radius: 4px;
  background: #fafafa;
`;
const DropIcon = styled.i`
  display: flex;
  align-items: flex-end;
  flex: none;
  width: ${p => p.$w}px;
  margin-left: ${p => p.$ml}px;
`;

const Layers = () => (
  <>
    <DockTitle $h={36}><Text $s={21} $ls={0.45} $w={229}>Layers</Text><DockButtons ml={5} /></DockTitle>
    <LayersBar>
      <ToolToggle $w={48} $down><Ico s={34}><FlatBrush /></Ico></ToolToggle>
      <Glyph width="32" height="34" viewBox="0 0 48 50" fill="none" $m="0 0 0 9px"><path d="M4 24V46H32M12 16V38H20M20 8V30H42V8H20" stroke="#888a85" strokeWidth="3" /><path d="M26 10V30Q30 36 34 30V4Q30 0 27 4" stroke="#37618e" strokeWidth="3" /><PlusBadge x={28} y={30} s={19} /></Glyph>
      <DropIcon $ml={18} $w={42}><Ico s={34}><Eye /></Ico><Caret $n={6} $m="0 0 0 -7px" /></DropIcon>
      <DropIcon $ml={8} $w={42}><Ico s={32}><Funnel /></Ico><Caret $n={6} $m="0 0 0 -5px" /></DropIcon>
      <ToolToggle $w={24} $ml={59}><More $s={25}>»</More></ToolToggle>
    </LayersBar>
    <Frame $h={515}>
      <Rows>
        <Row $pl={40}><Check><Tick /></Check><Dot $d={7} $c="#7fae68" $ml={24} /><LayerText $ml={26} $s={25.5} $ls={0.75}>waste_by_station</LayerText></Row>
        <Row $pl={42}><Ico s={28} v="0 0 28 32"><rect x="1" y="1" width="26" height="30" rx="2" fill="#f2f2f2" stroke="#888a85" strokeWidth="2" /><path d="M1 9H27" stroke="#888a85" strokeWidth="2" /><path d="M4 5h6M14 5h10M4 14h6M14 14h10M4 20h6M14 20h10M4 26h6M14 26h10" stroke="#888a85" strokeWidth="2" /></Ico><LayerText $ml={14} $s={25.5} $ls={0.4}>waste_disposal_</LayerText></Row>
        <Row $pl={40}><Check><Tick /></Check><Dot $d={7} $c="#75198b" $ml={24} /><LayerText $ml={25} $s={25.5} $w={120} $ls={0.3}>landfill_s</LayerText><FilterChip><Ico s={26}><Funnel a="#e8e8e8" top="#fff" e="#777" /></Ico></FilterChip><LayerText $s={25.5}>s</LayerText></Row>
        <Row $pl={40} $sel><Check><Tick /></Check><Swatch $c="#a9a9a9" $ml={12} /><LayerText $ml={12} $s={25.5} $ls={0.3} $u>wards</LayerText></Row>
      </Rows>
      <Bar>
        <Part $n={21}><Arrow $d="left" /></Part>
        <Part $n={78} />
        <Part $grow $groove />
        <Part $n={28}><Arrow $d="right" /></Part>
      </Bar>
    </Frame>
  </>
);

/* ---------- map ---------- */

// Every sheet stores its vertices in its own grid: [originX, originY, unitsPerPixelX, unitsPerPixelY].
const sheets = {
  N: [600, 290, 2.8, 3],
  S: [600, 780, 2.24, 2.644],
  W: [620, 750, 3, 3],
  E: [870, 700, 3, 3],
};
const project = (sheet, pts) => {
  const [ox, oy, sx, sy] = sheets[sheet];
  return pts.trim().split(/\s+/).map(p => {
    const [x, y] = p.split(',').map(Number);
    return `${(ox + x / sx).toFixed(1)},${(oy + y / sy).toFixed(1)}`;
  }).join(' ');
};

const coast = [
  ['N', '545,1398 548,1370 546,1318 540,1285 525,1240 510,1205 495,1180 466,1150 468,1142 445,1085 432,1030 425,975 422,955 408,930 408,915 426,900 431,870 427,830 417,790 407,770 397,745 372,738 385,730 390,737 385,705 370,672 350,637 333,612 328,595 317,575 300,553 280,545 260,540 243,517 247,503 232,477 207,475 215,465 209,450 215,440 205,410 190,395 167,380 162,340 213,307 210,285 235,230 275,180 287,173 322,190 384,181 422,132 460,46 510,62 537,68 567,80 602,108 613,131 640,155 638,205 640,229 684,234 700,228 743,222 776,247 785,337 755,352 768,384 783,396 849,428 884,426 895,528 907,560 953,598 981,594 1016,640 1023,637 1070,695 1079,750 1114,750 1129,733 1175,765 1193,769 1233,736 1239,696 1253,697 1262,642 1302,642 1325,605 1414,619 1403,648 1366,719 1342,744 1348,795 1345,836 1365,830 1372,838 1380,832 1414,839 1412,870 1406,890 1443,941 1383,950 1383,1010 1380,1017 1329,1037 1383,1085 1348,1143 1320,1164 1329,1214 1323,1219 1274,1240 1275,1258 1237,1262 1236,1318 1219,1345 1219,1398 1235,1433 1231,1462 1217,1443 1195,1460 1160,1475 1145,1485'],
  ['E', '415,260 410,280 398,325 440,342 475,365 490,363 472,395 455,455 457,470 447,487 490,548 476,556 510,607 487,640 487,665 500,682 520,705 550,720 555,740 600,760 618,771 655,772 672,800 685,770 660,766 698,726 740,735 765,748 795,738 815,722 817,712 845,710 850,688 868,670'],
  ['S', '1262,387 1290,385 1305,375 1337,352 1333,325 1351,310 1362,318 1385,322 1420,345 1440,372 1440,480 1428,505 1430,545 1437,553 1471,418 1512,532 1434,614 1412,655 1388,719 1430,725 1428,762 1461,769 1426,836 1408,828 1408,857 1382,873 1368,893 1357,897 1357,920 1340,939 1322,938 1312,955 1293,957 1295,980 1282,1004 1244,993 1252,1046 1235,1070 1225,1090 1200,1108 1186,1111 1200,1085 1202,1045 1195,1015 1175,985 1150,955 1153,930 1128,895 1124,875 1130,855 1165,823 1200,805 1222,795 1226,775 1213,768 1180,720 1150,672 1132,650 1120,620 1105,598 1085,580 1050,562 1000,545 955,533 870,526 850,532 800,527 700,530 650,541'],
  ['W', '810,710 705,738 640,750 570,768 510,790 470,812 440,842 410,872 408,886 380,888 370,915 388,940 385,962 368,985 370,1005'],
  ['S', '318,805 305,850 312,880 330,865 345,883 370,905 385,945 395,975 410,1000 412,1070 393,1085 393,1105 410,1130 392,1190 382,1250 395,1310 412,1335 435,1345 456,1370 420,1362 408,1375 375,1330 365,1312 340,1310 305,1290 285,1255 255,1225 262,1215 240,1160 230,1130 212,1120 218,1100 208,1060 208,990 192,915 193,900 182,865 165,843 150,833 132,840 120,820 105,785'],
  ['W', '95,1015 70,965 50,935 62,905 90,902 112,870 128,880 140,875 152,835 158,820 157,790 140,750 155,730 155,700 175,690 190,655 178,625 165,600 145,598 128,610 135,630 115,648 85,635 65,605 20,575 48,540 32,535 85,525 97,490 113,470 117,450 123,410 155,385 200,350 205,305 212,290 205,245 215,220 210,200 217,180 240,160 250,140 270,130 275,108 320,100 330,115 345,132 352,138 385,170 395,166 400,174 412,168 405,155 372,122 385,118 425,158 430,150 390,118 405,122 430,145 470,143 485,130 498,105 510,75 524,35 527,10'],
];
const coastPath = 'M' + coast.map(([s, p]) => project(s, p)).join(' ') + 'Z';
const island = 'M' + project('N', '218,1118 232,1114 247,1120 250,1135 260,1137 252,1158 268,1185 270,1205 240,1217 215,1200 213,1175 204,1150 207,1135') + 'Z';

const wards = {
  N: `684,234 690,255 684,262 703,285 690,302 675,315 655,315 644,296 624,325 597,313 556,287 550,300 542,305 550,310 558,310 560,330 569,352 560,375 543,397 530,388 519,378 515,400 505,418 480,432 455,462 453,510 437,540 430,570 423,575 412,560 345,482 320,575
417,790 470,748 518,700 560,676 572,674 592,715 592,835 602,885 618,888 655,830 701,801
863,430 722,708 701,801 690,862 702,1080 702,1170 680,1250 658,1320 653,1370 658,1440 665,1500
495,1180 517,1133 535,1168 560,1157 620,1146 668,1143 698,1178
515,1222 550,1230 570,1204 590,1198 612,1178 657,1157 662,1143
617,1178 638,1220 645,1214 668,1215 680,1245
702,1167 728,1168 728,1220 713,1245 731,1372 702,1425 710,1450
728,1220 752,1257 780,1278 850,1235 880,1242 890,1250 905,1248 930,1222 930,1205 915,1192 948,1188 958,1220 974,1240 1000,1225 1014,1218 1020,1225 1045,1215 1085,1183 1123,1137 1125,1162 1167,1163 1158,1132 1247,1118 1298,1170 1320,1164
780,1278 782,1290 800,1325 823,1375 825,1405 838,1445
905,1250 912,1270 925,1290 925,1305 945,1348 935,1410 930,1440
940,1325 958,1293 1023,1283
1045,1217 1050,1248 1025,1245 1023,1283 1015,1320 1010,1388 1022,1390
1085,1183 1092,1230 1085,1330 1055,1348 1052,1368
1274,1240 1200,1262 1160,1280 1020,1390 925,1443 840,1450 825,1435 805,1432 700,1453 657,1437 635,1440 590,1500
540,1300 560,1315 573,1340 585,1320 605,1308 630,1303 660,1310
548,1390 575,1400 585,1410 636,1418 640,1412 633,1445
1055,1420 1190,1310 1195,1300
1020,1390 1030,1415 1040,1470 1035,1500
1163,1340 1187,1390 1183,1405 1170,1418 1195,1460
1175,1330 1195,1340 1200,1328 1219,1338
1030,1415 1050,1412 1055,1420 1075,1412 1110,1412 1130,1440 1132,1490`,
  W: `495,192 672,160 720,143
430,177 500,160 545,155 625,62 645,57
640,100 650,100 672,160 680,200 678,295
740,70 752,105 773,128 810,125
752,108 712,118 715,142 728,145 743,180 810,177
430,178 468,178 495,172 495,192 515,235 515,265 548,285 565,280 635,268
795,180 803,228 743,230 745,258 762,260 762,280 790,290 810,270
605,245 620,233 660,242 730,247 740,250
658,242 655,270 640,275
728,250 735,260 725,292 700,290
610,272 680,298 745,320 770,330 805,385
680,298 645,310 640,328
270,130 325,135 335,130
270,130 290,165 320,150 325,170 298,210 315,222 340,210 385,212 415,215 460,198 495,200
290,165 245,218 300,320 275,350 290,385 303,385 330,350 395,290 460,290 490,275 520,275
388,212 380,225 392,240 392,290
405,290 412,308 435,322 430,345 413,355 428,378 428,405 470,445
505,280 495,322 472,365 475,400 468,445
520,265 540,290 545,320 532,380 530,445
562,280 562,380 580,405 595,405 615,440
568,330 580,315 602,320 640,328 735,350 745,320
600,320 602,368 645,382 665,380 690,388 715,365 715,350
645,382 622,408 615,440 620,450
665,382 668,435
670,405 700,395
465,447 500,450 570,443 620,450 680,435 720,448 810,448
723,350 722,460 765,520 800,585 810,630
738,355 735,445 765,490 810,490
765,372 770,390 762,440
780,385 790,395 780,440
290,387 318,410 293,425 290,470 295,530 335,568 375,555 378,575 400,590
115,450 150,452 172,438 205,455 217,440 260,465 292,470
290,505 283,508 273,497 232,525 232,572 178,620
203,598 220,655 265,718 340,775 320,785 297,797 320,835 288,825 285,885 302,905 245,952 197,925 192,900 148,920 128,895 125,878
320,835 345,808 410,850 410,865 460,820 460,808 447,800 462,775 418,735 460,715 500,712
302,905 375,962
477,450 468,570 455,615 435,648 405,610 400,570 428,490 455,490 470,510
560,447 545,495 550,530 562,553 628,545
620,450 625,520 645,660 705,738
468,570 505,550 530,535 550,550
530,535 530,580 522,625 487,640 490,652
530,580 550,605 580,583 632,575
550,605 565,610 555,620 530,640 530,655 560,705 573,715
437,650 487,652 515,672 518,692 545,690
455,655 455,718
505,790 500,700 520,692
765,520 810,515
328,125 375,97`,
  E: `0,255 20,280 78,268
165,257 155,262 115,262 78,250 80,280 98,405
165,257 172,235 190,240 205,232 210,260 240,275 275,300 300,325 360,300 362,322 380,335 398,325
303,240 290,275 265,325 255,385 232,525 180,600
98,405 115,385 195,377
115,385 175,345 180,285 240,275
0,330 45,328 83,315
45,328 50,380 65,400 98,395
0,380 50,378
190,382 160,435 135,485 120,565
160,435 245,438
220,390 255,385 320,408 340,430 330,442 317,480 320,530 340,545
380,335 362,350 365,400 370,415 345,430
155,445 165,490 180,520 165,548 210,550 235,525
168,495 185,475 210,472 240,480
185,480 200,510 270,525
270,540 265,487 298,485 302,465 318,465
268,525 275,550 315,600 335,600 345,630 340,672
335,600 338,535 360,530 367,545 390,565 425,548 440,590 487,662
345,633 440,592
0,475 55,535
0,513 60,545 175,598 250,638 340,675 430,720 475,670 487,662
0,600 150,583 170,605 135,640 20,670
65,400 50,410 52,435 60,460 55,535
0,410 15,415 15,430 50,435
15,520 20,545 15,595
40,535 30,570 30,598
63,545 63,590
45,598 45,660 0,640
20,620 20,635 70,632 70,605 100,615 105,650
0,650 40,705 55,770 75,800 120,830 125,840
95,655 155,780 145,825 165,840
105,685 85,690 100,735 52,738
100,735 105,755 132,750
108,757 120,800 75,815
125,718 180,700
172,605 185,735 160,750 200,810 225,815 225,838
155,785 180,780
180,652 240,650
240,640 240,740 270,735 300,775 360,770 355,785 345,810 355,835
235,697 295,690 310,722 270,735
310,722 350,745 345,768
205,615 205,632 225,650 250,635 270,655 285,685
245,650 265,660 272,690
225,780 285,838
245,780 265,795 320,808 322,775
430,720 410,770 475,825 475,840
365,692 335,735 385,762 410,760
615,770 760,870
640,800 600,868 640,885 638,898
815,722 827,730 833,828 805,850 780,832 765,870 745,880 785,935 862,990
785,935 757,960 765,990`,
  S: `1225,636 1240,658 1262,675 1345,710 1360,690 1370,705 1358,725 1355,752 1380,765 1428,762
1190,610 1172,632 1172,655 1155,668
1240,660 1215,680 1190,680 1195,700 1180,718
1225,645 1205,645 1205,660 1215,680`,
};
const wardPath = Object.entries(wards)
  .flatMap(([s, block]) => block.split('\n').map(l => 'M' + project(s, l)))
  .join('');

const stations = [
  ['#75198b', 845, 649], ['#75198b', 846, 641], ['#84b56c', 1028, 716.5], ['#84b56c', 944.5, 821],
  ['#75198b', 820.5, 839.3], ['#75198b', 944.5, 952.5], ['#84b56c', 808, 999.5],
];

const MapFrame = styled.div`
  flex: none;
  width: 1300px;
  height: 1047px;
  margin: 3px 0 0;
  background: #fff;
  border: 1px solid #b5b5b5;
`;
const MapCanvas = () => (
  <MapFrame>
    <svg width="1298" height="1045" viewBox="302 280 1298 1045" fill="none" strokeLinejoin="round">
      <g fill="#a9a9a9" stroke="#c6c6c6" strokeWidth="1.500">
        <path d={coastPath} />
        <path d={island} />
      </g>
      <path d={wardPath} stroke="#c9c9c9" strokeWidth="1.500" />
      {stations.map(([c, x, y]) => <circle key={x + y} cx={x} cy={y} r="5.700" fill={c} stroke="#232323" strokeWidth="1.600" />)}
    </svg>
  </MapFrame>
);

/* ---------- layer styling ---------- */

const Right = styled.aside`
  display: flex;
  flex-direction: column;
  flex: none;
  width: 897px;
`;
const StyleBody = styled.div`
  display: flex;
  margin: 24px 0 0 19px;
`;
const Tabs = styled.div`
  display: flex;
  flex-direction: column;
  flex: none;
  width: 76px;
`;
const ActiveTab = styled.div`
  display: grid;
  place-items: center;
  height: 52px;
  padding: 0 4px 10px 0;
`;
const DarkTabs = styled.div`
  display: flex;
  flex-direction: column;
  align-items: center;
  gap: 16px;
  height: 874px;
  padding: 8px 16px 0 0;
  background: #5c5c5c;
`;
const Content = styled.div`
  display: flex;
  flex-direction: column;
  width: 796px;
  margin-left: 6px;
`;
const SymbolArea = styled.div`
  display: flex;
  height: 223px;
  margin-top: 12px;
`;
const SymbolTree = styled.div`
  flex: none;
  width: 453px;
  margin: 0 13px 0 11px;
  background: #fff;
  border: 2px solid #bdbdbd;
  color: #262626;
`;
const ButtonGrid = styled.div`
  display: grid;
  grid-template-columns: 55px 55px;
  grid-auto-rows: 48px;
  gap: 8px 13px;
`;
const Push = styled.button`
  display: grid;
  place-items: center;
  width: ${p => p.$w || 55}px;
  height: ${p => p.$h || 48}px;
  padding: 0;
  background: ${raised};
  border: 2px solid ${p => (p.$off ? '#ccc' : '#aaa')};
  border-radius: 6px;
`;
const Rule = styled.hr`
  width: 100%;
  height: 3px;
  margin: 14px 0 0;
  border: 0;
  border-top: 1px solid #b5b5b5;
  background: #fff;
`;
const FormArea = styled.div`
  display: flex;
  height: 506px;
  overflow: hidden;
`;
const Form = styled.div`
  display: flex;
  flex-direction: column;
  flex: none;
  width: 773px;
`;
const Line = styled.div`
  display: flex;
  align-items: center;
  height: ${p => p.$h || 46}px;
  margin-top: ${p => p.$mt || 0}px;
  padding: ${p => p.$pt || 0}px 0 0 ${p => p.$pl ?? 21}px;
  gap: ${p => p.$gap || 0}px;
`;
const Stack = styled.div`
  display: flex;
  flex-direction: column;
  gap: ${p => p.$g}px;
`;
const OffsetLabel = styled.div`
  width: 125px;
  padding-top: 13px;
  letter-spacing: 0.2px;
`;
const TwoLine = styled.div`
  width: 125px;
  line-height: 33px;
  letter-spacing: 0.2px;
`;
const ShapeList = styled.div`
  display: flex;
  align-items: flex-start;
  width: 700px;
  height: 60px;
  margin: 14px 0 0 20px;
  padding: 8px 0 0 12px;
  background: #fff;
  border: 2px solid #bdbdbd;
`;
const OverrideButton = styled.div`
  display: flex;
  align-items: center;
  width: 60px;
  height: 54px;
  margin-left: 12px;
  padding-left: 6px;
  border: 2px solid #bcd7f5;
`;

const DownTwisty = () => <Caret $m="0 16px 0 0" />;

const Styling = () => (
  <Right>
    <DockTitle $pl={21}><Text $s={21} $w={832} $ls={0.4}>Layer Styling</Text><DockButtons ml={0} /></DockTitle>
    <Combo $w={890} $ml={19} $pl={14} $pr={23} $mt={3}>
      <Ico s={26} v="0 0 26 28"><g stroke="#777" strokeWidth="1.600"><circle cx="5" cy="9" r="2.300" /><circle cx="19" cy="3" r="2.300" /><circle cx="2.800" cy="23" r="2.300" /></g></Ico>
      <Text $ml={7} $ls={0.75}>waste_by_station_september _2023</Text><Fill /><Caret $m="0" />
    </Combo>
    <StyleBody>
      <Tabs>
        <ActiveTab><Ico s={46}><Brush /></Ico></ActiveTab>
        <DarkTabs>
          <Ico s={48}><path d="M3 24L9 12H45V36H9Z" fill="#ffe85a" stroke="#c4a000" strokeWidth="3" /><text x="12" y="31" fontSize="19" fontWeight="500" fill="#111" textLength="28">abc</text></Ico>
          <Ico s={48}><text x="3" y="32" fontSize="24" fontWeight="700" fill="#3a4a5c" stroke="#e8f0fc" strokeWidth="8" paintOrder="stroke" textLength="41">abc</text></Ico>
          <Ico s={48}><path d="M24 2L42 15L24 28L6 15Z" fill="#f28a8a" stroke="#b01010" strokeWidth="2" /><path d="M5 17L23 29V46L5 34Z" fill="#8ae234" stroke="#4e9a06" strokeWidth="2" /><path d="M43 17L25 29V46L43 34Z" fill="#ffe85a" stroke="#c4a000" strokeWidth="2" /></Ico>
          <Ico s={50}><rect x="15" y="2" width="18" height="15" fill="#f06060" /><path d="M11 12V32M38 12V32M24 18V40" stroke="#c08030" strokeWidth="4.500" /><path d="M15 17H33L28 22H20ZM2 36Q4 30 11 30Q18 30 20 36ZM28 36Q30 30 37 30Q44 30 46 36Z" fill="#d89a40" /><rect x="2" y="35" width="18" height="12" fill="#ffe85a" /><rect x="28" y="35" width="18" height="12" fill="#7fa9da" /></Ico>
          <Ico s={44} v="0 0 44 44"><g transform="scale(.58)"><RedoArrow /></g><g transform="translate(15 16) scale(.56)"><UndoArrow /></g></Ico>
        </DarkTabs>
      </Tabs>
      <Content>
        <Combo $w={820} $ml={1} $pl={12} $pr={34}>
          <Ico s={28} v="0 0 28 30"><g fill="#00b85c" stroke="#006035" strokeWidth="2"><rect x="1" y="2" width="20" height="6" /><rect x="5" y="12" width="20" height="6" /><rect x="1" y="22" width="20" height="6" /></g></Ico>
          <Text $ml={6} $ls={0.5}>Single Symbol</Text><Fill /><Caret $m="0" />
        </Combo>
        <SymbolArea>
          <svg width="200" height="222" viewBox="0 0 200 222"><path d="M101 12V212M0 113H200" stroke="#999" strokeWidth="2" /><circle cx="101" cy="113" r="6" fill="#84b56c" stroke="#333" strokeWidth="1.800" /></svg>
          <SymbolTree>
            <Row $pl={12}><DownTwisty /><Dot $d={13} $c="#84b56c" $ml={12} $mr={22} $bw={2} /><Text $b $ls={0}>Marker</Text></Row>
            <Row $pl={52} $sel><DownTwisty /><Dot $d={13} $c="#84b56c" $ml={12} $mr={21} $bw={2} /><Text $ls={0.1}>Filled Marker</Text></Row>
            <Row $pl={92}><DownTwisty /><Swatch $c="#84b56c" $e="#4d7042" $ml={2} /><Text $b $ml={12}>Fill</Text></Row>
            <Row $pl={166}><Swatch $c="#84b56c" $e="#4d7042" /><Text $ml={12} $ls={0.3}>Simple Fill</Text></Row>
          </SymbolTree>
          <ButtonGrid>
            <Push><Ico s={30} v="0 0 30 30"><path d="M11 2H19V11H28V19H19V28H11V19H2V11H11Z" fill="#fff" stroke="#5a8c5a" strokeWidth="2" /><path d="M15 6V24M6 15H24" stroke="#5a8c5a" strokeWidth="3.500" /></Ico></Push>
            <Push $off><Ico s={28} v="0 0 28 28"><path d="M14 3L26 24H2Z" fill="#d5d9dd" stroke="#c0c4c8" /></Ico></Push>
            <Push $off><Ico s={30} v="0 0 30 30"><rect x="2" y="11" width="26" height="9" fill="#fff" stroke="#dcc8c8" strokeWidth="2" /><path d="M6 15.500H24" stroke="#d8c0c0" strokeWidth="3" /></Ico></Push>
            <Push $off><Ico s={28} v="0 0 28 28"><path d="M14 24L26 3H2Z" fill="#d5d9dd" stroke="#c0c4c8" /></Ico></Push>
            <Push><Ico s={30} v="0 0 30 30"><path d="M2 6V28H22V24H6V6Z" fill="#aaa" stroke="#777" strokeWidth="1.500" /><rect x="6" y="2" width="22" height="22" fill="#f0f0f0" stroke="#777" strokeWidth="2" /><Badge x={17} y={17} s={13} /></Ico></Push>
            <Push><Ico s={32} v="0 0 32 32"><path d="M9 8Q9 2 16 3Q24 3 24 14" stroke="#999" strokeWidth="3" /><rect x="4" y="15" width="23" height="15" rx="2" fill="#f0dc20" stroke="#c4a000" strokeWidth="2" /></Ico></Push>
          </ButtonGrid>
        </SymbolArea>
        <Rule />
        <FormArea>
          <Form>
            <Line $pl={2} $mt={17} $h={48}><Text $w={220} $ls={0.35}>Symbol layer type</Text><Combo $w={530}><Text $ls={0.1}>Filled Marker</Text><Fill /><Caret $m="0" /></Combo></Line>
            <Line $mt={26} $h={47}><Text $w={125}>Size</Text><Spin $w={258} value="2.000000" ls={0.1} /><Combo $w={246} $h={48} $ml={12}><Text>Millimeters</Text><Fill /><Caret $m="0" /></Combo>
              <OverrideButton><Ico s={36} v="0 0 36 36"><path d="M11 6L1 18L11 30Z" fill="#999" stroke="#666" strokeWidth="1.500" /><rect x="11" y="2" width="24" height="32" fill="#f2f2f2" stroke="#888" strokeWidth="2" /><path d="M11 18H35" stroke="#888" strokeWidth="1.500" /><path d="M16 10H31M16 26H31" stroke="#555" strokeWidth="3" /></Ico><Caret $n={5} $m="26px 0 0 4px" /></OverrideButton></Line>
            <Line $mt={17}><Text $w={125} $ls={0.3}>Rotation</Text><Spin $w={257} value="0.00 °" ls={0.2} /></Line>
            <Line $mt={19} $h={107}><OffsetLabel>Offset</OffsetLabel>
              <Stack $g={15}>
                <Line $pl={0}><Text $w={26}>x</Text><Spin $w={231} value="0.000000" ls={0.6} $pl={8} /></Line>
                <Line $pl={0}><Text $w={26}>y</Text><Spin $w={231} value="0.000000" ls={0.6} $pl={8} /></Line>
              </Stack></Line>
            <Line $mt={29} $h={112}><TwoLine>Anchor<br />point</TwoLine>
              <Stack $g={16}><Combo $w={560}><Text>VCenter</Text></Combo><Combo $w={560}><Text $ls={0.2}>HCenter</Text></Combo></Stack></Line>
            <ShapeList>
              <svg width="280" height="50" viewBox="0 0 280 50" fill="#c8c8c8" stroke="#111" strokeWidth="2"><rect x="1" y="1" width="48" height="40" /><path d="M84 40V17Q84 13 90 13H104Q110 13 110 17V40ZM145 40V13H181V40ZM228 40L232 13H262L266 40Z" /></svg>
            </ShapeList>
          </Form>
          <Bar $v $mt={14}><Part $v $n={26}><Arrow $d="up" /></Part><Part $v $grow /></Bar>
        </FormArea>
        <Line $pl={9} $h={72} $pt={14}><BigTwisty /><Text $b $ls={0.5}>Layer Rendering</Text></Line>
        <Line $pl={0} $gap={12}><Push $w={48} $h={46}><Ico s={30}><UndoArrow /></Ico></Push><Push $w={48} $h={46}><Ico s={30}><RedoArrow /></Ico></Push></Line>
      </Content>
    </StyleBody>
  </Right>
);

const Menu = styled.div`
  position: absolute;
  left: 2030px;
  top: 835px;
  width: 480px;
  height: 493px;
  background: #fff;
  border: 2px solid #a0a0a0;
  box-shadow: 0 8px 24px rgba(0, 0, 0, 0.35);
`;
const Item = styled.div`
  display: flex;
  align-items: center;
  height: 48px;
  padding-left: ${p => (p.$check ? 14 : 54)}px;
  gap: 12px;
  font-size: 25px;
  letter-spacing: ${p => p.$ls ?? 0.25}px;
  font-weight: ${p => (p.$b ? 700 : 400)};
  font-style: ${p => (p.$head ? 'italic' : 'normal')};
  color: ${p => (p.$head ? '#bdbdbd' : p.$on ? '#fff' : '#262626')};
  background: ${p => (p.$on ? '#7ca3ec' : 'none')};
`;
const MenuRule = styled.div`
  height: 4px;
  margin-left: 7px;
  background: linear-gradient(#b5b5b5, #b5b5b5) 0 0 / 100% 1px no-repeat;
`;
const RedBox = styled.div`
  position: absolute;
  left: ${p => p.$x}px;
  top: ${p => p.$y}px;
  width: ${p => p.$w}px;
  height: ${p => p.$h}px;
  border: 3px solid #fb2a08;
  border-radius: ${p => (p.$round ? '50%' : 0)};
`;

const Status = styled.footer`
  display: flex;
  align-items: flex-start;
  flex: none;
  height: 47px;
  padding-top: 7px;
  overflow: hidden;
  background: linear-gradient(#ececec, #dedede);
  color: #222;
`;
const StatusText = styled(Text)`
  height: 50px;
  line-height: 50px;
`;

export default function App() {
  return (
    <Window>
      <GlobalStyle />
      <TitleBar>
        <Lights><Light $c="#ff5f57" $b="#e2463f" /><Light $c="#febc2e" $b="#e1a325" /><Light $c="#28c840" $b="#1dad2b" /></Lights>
        <WindowTitle>*Untitled Project — QGIS</WindowTitle>
      </TitleBar>

      <Toolbar $h={76}>
        <Group $w={419}>
          <Grip $ml={2} /><T i="page" /><T i="open" /><T i="save" /><T i="layout" /><T i="wrench" /><T i="style" />
        </Group>
        <Group $w={1087}>
          <Grip /><T i="hand" $state="down" /><T i="pan" /><T i="zin" /><T i="zout" /><T i="zfull" /><T i="zsel" /><T i="zlayer" $state="on" /><T i="znative" $off /><T i="zlast" /><T i="znext" $off /><T i="newmap" /><T i="map3d" /><T i="bookmark" /><T i="showbm" $state="on" /><T i="clock" /><T i="refresh" />
        </Group>
        <Group $w={990}>
          <Grip /><T i="identify" /><T i="abacus" /><T i="gear" /><T i="sigma" /><T i="table" /><Caret $m="0 4px 0 3px" /><T i="ruler" /><Caret $m="0 4px 0 3px" /><T i="tip" /><T i="action" /><Caret $m="0 0 0 3px" />
        </Group>
      </Toolbar>

      <Toolbar $h={78}>
        <Group $w={485} $pt={2}>
          <Grip $ml={2} /><T i="source" /><T i="gpkg" /><T i="shp" /><T i="spatialite" /><T i="chip" /><T i="mesh" /><T i="virtual" />
        </Group>
        <Group $w={938} $pt={2}>
          <Grip /><T i="pencils" $off /><Caret $n={6} $m="36px -2px 0 -10px" /><T i="pencil" /><T i="saveedit" $off /><T i="line" $off /><Caret $m="0 2px 0 8px" /><T i="poly" $ml={3} $off $w={62} /><T i="vertex" $off $w={64} /><Caret $m="0 5px 0 7px" /><T i="form" $off $w={66} /><T i="trash" $ml={2} $off /><T i="cut" $off /><T i="copy" $off /><T i="paste" $off /><T i="undo" $off /><T i="redo" $off />
        </Group>
        <Group $w={653} $pt={2}>
          <Grip /><T i="label" $w={62} /><T i="diagram" $ml={5} /><Divider $ml={6} $mr={4} /><T i="pin" $w={65} /><T i="labelred" $w={65} /><Divider $ml={8} $mr={4} /><T i="pinoff" $off /><T i="labeleye" $off /><T i="labelmove" $off /><T i="labelrot" $off /><T i="labeledit" $off />
        </Group>
        <Group $w={174} $pt={2}>
          <Grip /><T i="globe" $w={64} /><More $ml={60}>»</More>
        </Group>
        <Group $w={123} $pt={2}><Grip /><T i="python" $w={62} /><More $ml={10}>»</More></Group>
        <Group $w={97} $pt={2}><Grip /><T i="book" $w={62} /></Group>
        <Group $w={30} $pt={2}><Grip /></Group>
      </Toolbar>

      <Toolbar $h={76}>
        <Group $w={155} $pt={4}><Grip $ml={2} /><T i="osmsearch" /><T i="qms" /></Group>
        <Group $w={97} $pt={4}><Grip /><T i="bus" /></Group>
        <Group $w={97} $pt={4}><Grip /><T i="gtfs" /></Group>
        <Group $w={1607} $pt={4}>
          <Grip /><T i="select" /><Caret $m="0 2px" /><T i="selform" $ml={5} /><Caret $m="0 3px 0 2px" /><T i="deselect" $ml={4} /><Caret $m="0 2px 0 1px" /><T i="selloc" $ml={3} />
        </Group>
        <Group $w={540} $pt={4}><Grip /></Group>
      </Toolbar>

      <Main>
        <Left>
          <Browser />
          <SplitDots />
          <Layers />
        </Left>
        <EdgeDots $m="494px 4px 0 6px" />
        <MapCanvas />
        <Styling />
      </Main>

      <Status>
        <Field $w={428} $h={60} $pl={14} $top>
          <Glyph width="28" height="28" viewBox="0 0 28 28" fill="none" $m="10px 0 0"><circle cx="11" cy="11" r="9" stroke="#888" strokeWidth="2.200" /><path d="M18 18L26 26" stroke="#888" strokeWidth="3" /></Glyph>
          <StatusText $ml={14} $c="#7a7a7a" $s={25} $ls={0.5}>Type to locate (⌘K)</StatusText>
        </Field>
        <StatusText $s={22} $ml={287} $w={122}>Coordinate</StatusText>
        <Field $w={236} $h={60} $pl={18} $mt={3} $top><Text $s={23} $ls={0.1} $lh={43}>2121179,-4019199</Text></Field>
        <Glyph width="32" height="34" viewBox="0 0 32 34" fill="none" $m="6px 0 0 9px"><path d="M3 10Q2 3 9 2L14 3L24 18Q28 30 18 31Q12 30 12 22Z" fill="#fff" stroke="#111" strokeWidth="2.600" /><path d="M8 3Q6 12 14 20M13 4Q10 10 17 17" stroke="#111" strokeWidth="3.200" /><circle cx="18" cy="24" r="7" fill="#fff" stroke="#111" strokeWidth="2.200" /><circle cx="18" cy="24" r="2.500" stroke="#111" strokeWidth="2" /><path d="M18 7l9-2M22 11l8-6M2 21l4 0" stroke="#111" strokeWidth="1.800" strokeDasharray="2 3" /></Glyph>
        <StatusText $s={22} $ml={26} $w={64}>Scale</StatusText>
        <Combo $w={184} $h={60} $pl={6} $pr={0} $top><Text $s={22} $lh={48}>1:1356978</Text><Fill /><DropZone><Caret $m="0" /></DropZone></Combo>
        <Glyph width="24" height="40" viewBox="0 0 24 40" fill="none" $m="10px 0 0 26px"><path d="M4 18V10Q4 2 12 2Q20 2 20 10V18" stroke="#999" strokeWidth="3.500" /><rect x="0" y="15" width="24" height="22" rx="4" fill="#666" /></Glyph>
        <StatusText $s={22} $ml={18} $w={106}>Magnifier</StatusText>
        <Spin $w={185} value="100%" ts={22} $mt={2} $pl={8} />
        <StatusText $s={22} $ml={18} $w={107}>Rotation</StatusText>
        <Spin $w={185} value="0.0 °" ts={22} $mt={2} $pl={8} />
        <Check $ml={13} $mt={10}><Tick /></Check>
        <StatusText $s={22} $ml={10} $w={104}>Render</StatusText>
        <Glyph width="32" height="32" viewBox="0 0 32 32" fill="none" stroke="#777" strokeWidth="2" $m="8px 0 0 2px"><circle cx="16" cy="14" r="13" fill="#aaa" /><ellipse cx="16" cy="14" rx="6" ry="13" /><path d="M3 14H29M5 8H27M5 20H27M16 1V27" /><path d="M0 14H4M28 14H32" /></Glyph>
        <StatusText $s={22} $ml={4} $w={166} $ls={0.1} $c="#111">EPSG:3857</StatusText>
        <Glyph width="34" height="34" viewBox="0 0 34 34" $m="7px 0 0"><circle cx="16" cy="15" r="15" fill="#5c5c5c" /><path d="M18 26L32 33L28 22Z" fill="#5c5c5c" /><circle cx="9" cy="15" r="2.300" fill="#fff" /><circle cx="16" cy="15" r="2.300" fill="#fff" /><circle cx="23" cy="15" r="2.300" fill="#fff" /></Glyph>
      </Status>

      <Menu>
        <Item $head $ls={0.35}>Data defined override</Item>
        <Item>Description...</Item>
        <MenuRule />
        <Item $check $ls={0.45}><Check />Store Data in the Project</Item>
        <Item $head $ls={0.35}>Attribute Field</Item>
        <Item $check><Check />Field type: int,double,string</Item>
        <MenuRule />
        <Item $head $ls={0.2}>Expression</Item>
        <Item $check><Check />Variable</Item>
        <Item $on>Edit...</Item>
        <Item>Paste</Item>
        <MenuRule />
        <Item $b $ls={0.6}>Assistant...</Item>
      </Menu>
      <RedBox $x={1916} $y={703} $w={243} $h={64} />
      <RedBox $x={2369} $y={771} $w={76} $h={72} $round />
      <RedBox $x={2032} $y={1176} $w={254} $h={56} />
    </Window>
  );
}
